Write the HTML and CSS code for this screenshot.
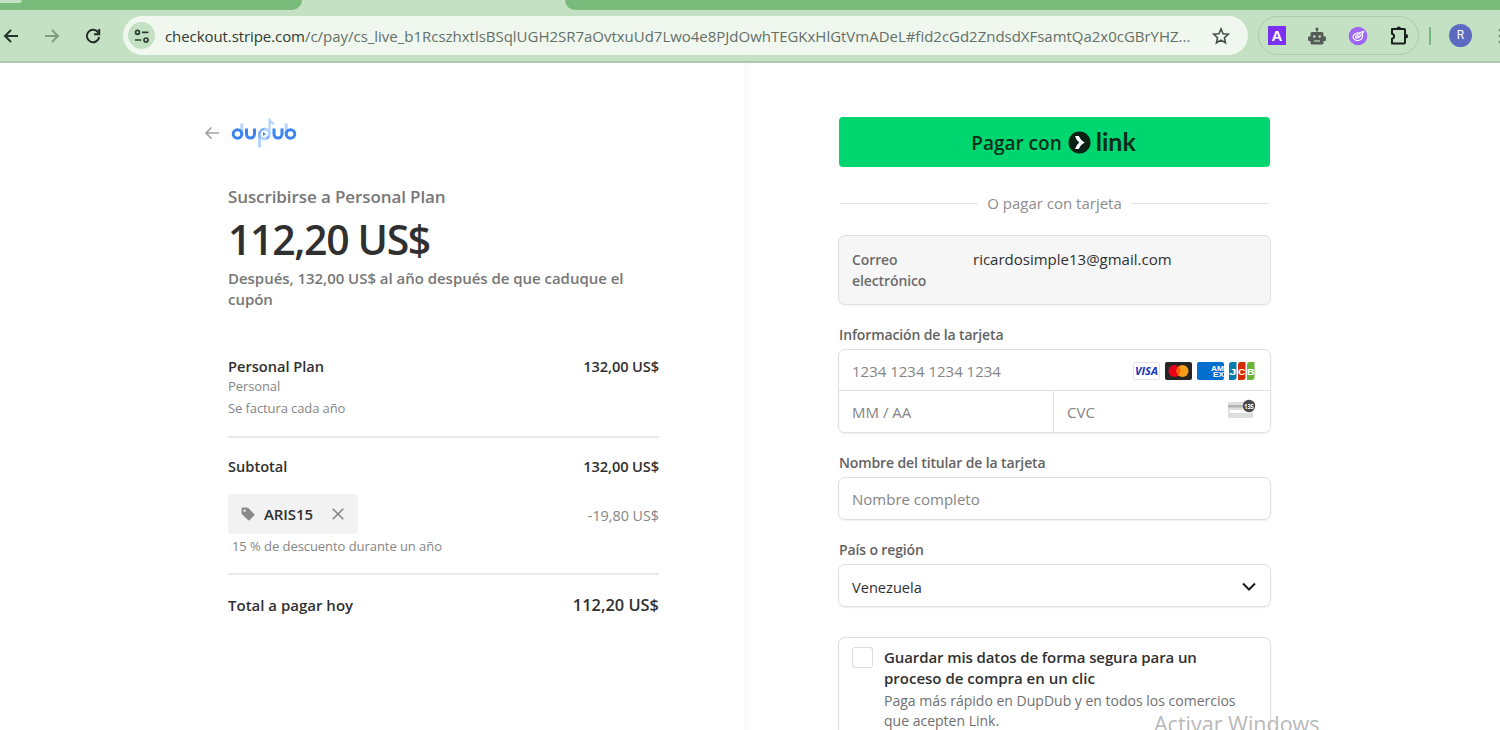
FILE: index.html
```html
<!DOCTYPE html>
<html lang="es">
<head>
  <meta charset="UTF-8">
  <title>DupDub</title>
  <link rel="stylesheet" href="styles.css">
</head>
<body>
  <div class="tabstrip">
    <div class="tab-bg tab-bg-left"><span class="tab-hover"></span></div>
    <div class="tab-bg tab-bg-right"></div>
  </div>
  <div class="toolbar">
    <div class="nav">
      <svg width="20" height="20" viewBox="0 0 20 20" fill="none" stroke="#26352a" stroke-width="2"><path d="M17 10H4M10 4l-6 6 6 6"/></svg>
      <svg width="20" height="20" viewBox="0 0 20 20" fill="none" stroke="#7f9b82" stroke-width="1.8"><path d="M3 10h13M10 4l6 6-6 6"/></svg>
      <svg width="20" height="20" viewBox="0 0 20 20" fill="none" stroke="#1f2b22" stroke-width="2"><path d="M15.4 6.8A6.2 6.2 0 1 0 16.2 11"/><path d="M16.2 3v5.2H11"/></svg>
    </div>
    <div class="address">
      <span class="site-info">
        <svg width="16" height="16" viewBox="0 0 16 16" fill="none" stroke="#2c3c30" stroke-width="1.7"><circle cx="3.500" cy="4.300" r="2"/><path d="M8 4.300h6.500M1 12h6.300"/><circle cx="12" cy="12" r="2"/></svg>
      </span>
      <span class="url"><b>checkout.stripe.com</b>/c/pay/cs_live_b1RcszhxtlsBSqlUGH2SR7aOvtxuUd7Lwo4e8PJdOwhTEGKxHlGtVmADeL#fid2cGd2ZndsdXFsamtQa2x0cGBrYHZ...</span>
      <svg class="star" width="18" height="18" viewBox="0 0 18 18" fill="none" stroke="#465249" stroke-width="1.6"><path d="M9 1.9l2.1 4.8 5.2.5-3.9 3.5 1.1 5.1L9 13.1l-4.5 2.700 1.100-5.100-3.900-3.500 5.200-.5z"/></svg>
    </div>
    <div class="extensions">
      <span class="ext-a">A</span>
      <svg width="20" height="20" viewBox="0 0 20 20" fill="#555b56"><circle cx="10" cy="3" r="1.600"/><path d="M9.400 4h1.200v3H9.400zM5 6h10q1.500 0 1.500 1.500v9.500q0 1.500-1.500 1.500H5q-1.500 0-1.500-1.500V7.500Q3.500 6 5 6zM1 11.500q0-1 1-1h2v4.500H2q-1 0-1-1zM16 10.500h2q1 0 1 1v2.500q0 1-1 1h-2z"/><circle cx="7.300" cy="10.500" r="1.200" fill="#c5e1c4"/><circle cx="12.700" cy="10.500" r="1.200" fill="#c5e1c4"/><path stroke="#c5e1c4" stroke-width="1.200" d="M7 15h6"/></svg>
      <svg width="20" height="20" viewBox="0 0 20 20" fill="none" stroke="#fff" stroke-width="1.200"><circle cx="10" cy="10" r="9.300" fill="#9d66f3" stroke="none"/><path d="M14.500 8.500c1 3.500-2 6.200-5 6-2.500 0-4.500-1.800-4.500-3.500s2.500-4 5.500-4.500"/><path d="M7.500 11.500c0-2 4-5.500 8-6-1 3-4.500 6.500-6.500 6.700-.8.100-1.500-.2-1.500-.7zM9 10.500l2.500-.5M11 7.500l1.500 1"/></svg>
      <svg width="21" height="21" viewBox="0 0 21 21" fill="none" stroke="#17201a" stroke-width="2"><path stroke-linejoin="round" d="M3 4h12q1 0 1 1v12.500q0 1-1 1H3v-4.700a2.600 2.600 0 0 0 0-5.100z"/><path fill="#17201a" stroke="none" d="M7.500 4a2.300 2.600 0 0 1 4.600 0zM16.500 8.900a2.600 2.300 0 0 1 0 4.600z"/></svg>
    </div>
    <span class="separator"></span>
    <span class="avatar">R</span>
    <svg class="kebab" width="2" height="16" viewBox="0 0 2 16" fill="#7c927e"><circle cx="2" cy="2" r="1.500"/><circle cx="2" cy="8" r="1.500"/><circle cx="2" cy="14" r="1.500"/></svg>
  </div>

  <div class="page">
    <div class="summary">
      <div class="brand">
        <svg width="16" height="14" viewBox="0 0 16 14" fill="none" stroke="#a3a3a3" stroke-width="1.700"><path d="M15 7H2M7.500 1.500L2 7l5.500 5.500"/></svg>
        <svg class="logo" width="68" height="34" viewBox="0 0 68 34" fill="none" stroke="#3b84f2" stroke-width="3">
          <g stroke="#b5d3fb"><path d="M10.800 7.500V18M28.500 18v13.500M55.200 7.500V18"/><circle cx="33.500" cy="18" r="5"/><path d="M38.500 18V2.500q0 3.500 4.500 5.500" stroke-width="2.200"/></g>
          <circle cx="6.500" cy="18" r="4.300"/>
          <path d="M15.500 12.500V18a4 4 0 0 0 8 0v-5.500M43 12.500V18a4 4 0 0 0 8 0v-5.500"/>
          <circle cx="59.500" cy="18" r="4.300"/>
          <path d="M28.500 22v-4a5 5 0 0 1 5-5M35 22.500q2-.800 2.800-2.500" stroke-width="1.800" stroke="#76adf7"/>
          <path d="M32 16l3 2-3 2z" fill="#3b84f2" stroke="none"/>
        </svg>
      </div>
      <div class="product">Suscribirse a Personal Plan</div>
      <div class="amount">112,20 US$</div>
      <div class="after">Después, 132,00 US$ al año después de que caduque el<br>cupón</div>

      <div class="line plan"><span>Personal Plan</span><span class="price">132,00 US$</span></div>
      <div class="detail">Personal</div>
      <div class="detail billing">Se factura cada año</div>
      <div class="line subtotal"><span>Subtotal</span><span class="price">132,00 US$</span></div>
      <div class="line discount">
        <span class="coupon">
          <svg width="16" height="16" viewBox="0 0 16 16"><path fill="#8a8a8a" fill-rule="evenodd" d="M1.500 2.800q0-1.300 1.300-1.300h4.400q.6 0 1 .4l6 6q.8.800 0 1.600l-4.500 4.600q-.8.700-1.600 0L1.900 8.300q-.4-.4-.4-1zM4.500 3.400a1.200 1.200 0 1 0 .01 0z"/></svg>
          <b>ARIS15</b>
          <svg width="14" height="14" viewBox="0 0 14 14" stroke="#858585" stroke-width="1.600"><path d="M1.700 1.700l10.600 10.600M12.300 1.700L1.700 12.300"/></svg>
        </span>
        <span class="minus">-19,80 US$</span>
      </div>
      <div class="coupon-note">15 % de descuento durante un año</div>
      <div class="line total"><span>Total a pagar hoy</span><span class="total-price">112,20 US$</span></div>
    </div>

    <div class="payment">
      <button class="link-button">
        <span class="pay-with">Pagar con</span>
        <svg width="23" height="23" viewBox="0 0 23 23"><circle cx="11.500" cy="11.500" r="11" fill="#0a2014"/><path d="M7 5h3.900q1.500 4.300 5.900 6.500-4.400 2.200-5.900 6.500H7q1.100-4 4.300-6.500Q8.100 9 7 5z" fill="#fff"/></svg>
        <span class="link-word">link</span>
      </button>
      <div class="or"><span>O pagar con tarjeta</span></div>
      <div class="email-box">
        <div class="email-label">Correo<br>electrónico</div>
        <div class="email">ricardosimple13@gmail.com</div>
      </div>

      <div class="label">Información de la tarjeta</div>
      <div class="card-box">
        <div class="card-number">
          <span class="hint">1234 1234 1234 1234</span>
          <svg width="122" height="20" viewBox="0 0 122 20">
            <rect x=".5" y="1.500" width="26" height="17" rx="1" fill="#fff" stroke="#e4e4e4"/>
            <text class="visa" x="2" y="14" textLength="23" lengthAdjust="spacingAndGlyphs">VISA</text>
            <rect x="32" y="1" width="27" height="18" rx="2" fill="#252525"/>
            <circle cx="41.500" cy="10" r="6" fill="#eb001b"/><circle cx="49.500" cy="10" r="6" fill="#f79e1b"/><path d="M45.500 5.500a6 6 0 0 1 0 9 6 6 0 0 1 0-9z" fill="#ff5f00"/>
            <rect x="64" y="1" width="27" height="18" rx="2" fill="#016fd0"/>
            <g class="amex"><text x="78" y="9.800" textLength="13" lengthAdjust="spacingAndGlyphs">AM</text><text x="80" y="16" textLength="11" lengthAdjust="spacingAndGlyphs">EX</text></g>
            <path d="M98.500 1h5v15q0 3-3 3h-4.500V4q0-3 2.500-3z" fill="#0b7cae"/><path d="M107.500 1h5v15q0 3-3 3H105V4q0-3 2.500-3z" fill="#d42d06"/><path d="M116.500 1h5v15q0 3-3 3H114V4q0-3 2.500-3z" fill="#67b637"/>
            <g class="jcb"><text x="96" y="13.500" textLength="7.500" lengthAdjust="spacingAndGlyphs">J</text><text x="105" y="13.500" textLength="7.500" lengthAdjust="spacingAndGlyphs">C</text><text x="114" y="13.500" textLength="7.500" lengthAdjust="spacingAndGlyphs">B</text></g>
          </svg>
        </div>
        <div class="card-extra">
          <div class="expiry"><span class="hint">MM / AA</span></div>
          <div class="cvc">
            <span class="hint">CVC</span>
            <svg width="30" height="20" viewBox="0 0 30 20"><rect x="1" y="3" width="25" height="16" rx="1.500" fill="#dedede"/><path d="M1 6h18v2.500H1z" fill="#b3b3b3"/><path d="M3 11h20v3H3z" fill="#fff"/><circle cx="22" cy="7" r="6.200" fill="#4a4a4a"/><text class="digits" x="17.200" y="9.700" textLength="9.600" lengthAdjust="spacingAndGlyphs">135</text></svg>
          </div>
        </div>
      </div>

      <div class="label">Nombre del titular de la tarjeta</div>
      <div class="field"><span class="hint">Nombre completo</span></div>
      <div class="label">País o región</div>
      <div class="field country">
        <span>Venezuela</span>
        <svg width="14" height="10" viewBox="0 0 14 10" fill="none" stroke="#1a1a1a" stroke-width="2"><path d="M1 1.500l6 6 6-6"/></svg>
      </div>
      <div class="save-box">
        <span class="checkbox"></span>
        <div>
          <div class="save-title">Guardar mis datos de forma segura para un<br><span class="save-second">proceso de compra en un clic</span></div>
          <div class="save-text">Paga más rápido en DupDub y en todos los comercios<br>que acepten Link.</div>
        </div>
      </div>
    </div>
  </div>
  <div class="watermark">Activar Windows</div>
</body>
</html>
```

FILE: styles.css
```css
* { box-sizing: border-box; }
body {
  margin: 0;
  width: 1500px;
  height: 730px;
  overflow: hidden;
  position: relative;
  background: #fff;
  color: #303030;
  font-family: "Open Sans", "Noto Sans", sans-serif;
  font-size: 14px;
  line-height: 20px;
}
svg { display: block; flex: none; }
span, .product, .amount, .label { white-space: nowrap; }

/* browser chrome */
.tabstrip {
  display: flex;
  justify-content: space-between;
  height: 10px;
  background: #c5e1c4;
}
.tab-bg { background: #78bb7b; height: 10px; }
.tab-bg-left { width: 302px; border-bottom-right-radius: 10px; }
.tab-bg-right { width: 935px; border-bottom-left-radius: 10px; }
.tab-hover {
  display: block;
  width: 22px;
  height: 3px;
  background: #c5e1c4;
  border-bottom-right-radius: 6px;
}
.toolbar {
  display: flex;
  align-items: center;
  height: 53px;
  background: #c5e1c4;
  border-bottom: 2px solid #aac8ab;
}
.nav {
  display: flex;
  gap: 21px;
  width: 123px;
  padding-left: 1px;
}
.address {
  display: flex;
  align-items: center;
  width: 1125px;
  height: 39px;
  padding: 0 18px 0 5px;
  border-radius: 20px;
  background: #eff7ee;
}
.site-info {
  display: flex;
  align-items: center;
  justify-content: center;
  width: 27px;
  height: 27px;
  border-radius: 50%;
  background: #c5e1c4;
}
.url {
  width: 1030px;
  margin-left: 10px;
  color: #657068;
  font-size: 15px;
  letter-spacing: -0.02px;
}
.url b { color: #303a33; font-weight: 400; letter-spacing: -0.08px; }
.star { margin-left: auto; }
.extensions {
  display: flex;
  align-items: center;
  gap: 21px;
  width: 161px;
  height: 39px;
  margin-left: 10px;
  padding-left: 9px;
  border: 1px solid #aacbab;
  border-radius: 20px;
}
.ext-a {
  width: 18px;
  height: 19px;
  background: #7b2ff0;
  color: #fff;
  font: bold 15px/19px "Liberation Sans", sans-serif;
  text-align: center;
}
.separator {
  width: 2px;
  height: 18px;
  margin-left: 10px;
  background: #78bb7b;
}
.avatar {
  width: 23px;
  height: 23px;
  margin-left: 18px;
  border-radius: 50%;
  background: #5c6bc0;
  color: #fff;
  font: 12px/23px Roboto, sans-serif;
  text-align: center;
}
.kebab { margin-left: auto; }

/* checkout */
.page { display: flex; height: 667px; overflow: hidden; }
.summary {
  width: 749px;
  padding: 53px 85px 0 228px;
  border-right: 5px solid #fbfbfb;
}
.brand {
  display: flex;
  align-items: center;
  gap: 11px;
  height: 34px;
  margin-left: -24px;
}
.product {
  margin-top: 36px;
  height: 22px;
  line-height: 22px;
  color: #777;
  font-size: 17px;
  font-weight: 600;
  letter-spacing: -0.1px;
}
.amount {
  height: 58px;
  margin-top: 2px;
  line-height: 58px;
  font-size: 41px;
  font-weight: 600;
  letter-spacing: -1.35px;
}
.after {
  color: #777;
  font-size: 15px;
  font-weight: 600;
  letter-spacing: -0.03px;
  line-height: 20.5px;
  white-space: nowrap;
}
.line {
  display: flex;
  justify-content: space-between;
  align-items: center;
  font-size: 14.6px;
  font-weight: 600;
}
.price { letter-spacing: -0.1px; }
.plan { margin-top: 47px; }
.detail { color: #858585; font-size: 13px; line-height: 21px; letter-spacing: -0.1px; }
.billing { height: 41px; line-height: 22px; border-bottom: 2px solid #e9e9e9; }
.subtotal { margin-top: 18px; }
.discount { margin-top: 18px; }
.coupon {
  display: flex;
  align-items: center;
  width: 130px;
  height: 40px;
  padding: 0 13px 0 12px;
  border-radius: 4px;
  background: #f2f2f2;
  font-size: 15px;
}
.coupon b { margin: 0 auto 0 8px; font-weight: 600; letter-spacing: -0.1px; }
.minus { color: #858585; font-size: 14.3px; font-weight: 400; padding-top: 3px; }
.coupon-note {
  height: 41px;
  padding: 2px 0 0 4px;
  border-bottom: 2px solid #e9e9e9;
  color: #858585;
  font-size: 13px;
  letter-spacing: -0.06px;
}
.total { margin-top: 20px; font-size: 15px; }
.total-price { font-size: 16.4px; }

.payment { width: 433px; margin-left: 89px; padding-top: 54px; }
.link-button {
  display: flex;
  align-items: center;
  justify-content: center;
  gap: 6px;
  width: 431px;
  height: 50px;
  margin-left: 1px;
  padding: 0 2px 0 0;
  border: 0;
  border-radius: 4px;
  background: #00d66f;
  color: #0a2e1a;
  font: 600 19px "Open Sans", sans-serif;
}
.pay-with { padding-top: 1px; }
.link-word { font: bold 25px Lato, sans-serif; margin-left: -1px; padding-bottom: 2px; }
.or {
  display: flex;
  align-items: center;
  gap: 9px;
  height: 20px;
  margin: 26px 2px 0;
  color: #8d8d8d;
  font-size: 15px;
}
.or::before, .or::after {
  content: "";
  flex: 1;
  height: 1px;
  background: #e4e4e4;
}
.email-box {
  display: flex;
  height: 70px;
  margin-top: 22px;
  padding: 14px 13px;
  border: 1px solid #e0e0e0;
  border-radius: 7px;
  background: #f6f6f6;
  box-shadow: 0 1px 2px #0000000d;
}
.email-label {
  width: 121px;
  color: #6b6b6b;
  font-weight: 600;
  letter-spacing: -0.1px;
  line-height: 20.5px;
}
.email { font-size: 15px; line-height: 18px; }
.label {
  height: 20px;
  margin: 20px 0 4px 1px;
  color: #626262;
  font-weight: 600;
  letter-spacing: -0.13px;
}
.card-box, .field, .save-box {
  border: 1px solid #e0e0e0;
  border-radius: 7px;
  box-shadow: 0 1px 2px #00000012;
}
.card-box { height: 84px; }
.card-number {
  display: flex;
  align-items: center;
  justify-content: space-between;
  height: 41px;
  padding: 2px 15px 0 13px;
  border-bottom: 1px solid #e0e0e0;
}
.card-extra { display: flex; height: 41px; }
.expiry, .cvc { display: flex; align-items: center; padding: 0 13px; }
.expiry { width: 215px; border-right: 1px solid #e0e0e0; }
.cvc { flex: 1; justify-content: space-between; }
.cvc svg { margin-top: -6px; }
.hint { color: #858585; font-size: 15px; }
.visa { font: italic bold 11px "Open Sans", sans-serif; fill: #1a34bd; }
.amex { font: bold 8px "Liberation Sans", sans-serif; fill: #fff; }
.jcb { font: bold 9px "Liberation Sans", sans-serif; fill: #fff; }
.digits { font: bold 7.5px "Open Sans", sans-serif; fill: #fff; }
.field {
  display: flex;
  align-items: center;
  justify-content: space-between;
  height: 43px;
  padding: 0 14px 0 13px;
}
.country { padding-top: 2px; font-size: 14.6px; }
.save-box {
  display: flex;
  gap: 11px;
  height: 93px;
  margin-top: 30px;
  padding: 9px 13px 0;
  border-bottom: 0;
  border-radius: 7px 7px 0 0;
}
.checkbox {
  width: 21px;
  height: 21px;
  border: 1px solid #dcdcdc;
  border-radius: 3px;
}
.save-title {
  font-weight: 600;
  font-size: 15px;
  letter-spacing: -0.1px;
  line-height: 20.5px;
  white-space: nowrap;
}
.save-second { letter-spacing: 0; }
.save-text { margin-top: 3px; color: #707070; line-height: 19.500px; white-space: nowrap; }
.watermark {
  position: absolute;
  left: 1154px;
  top: 710px;
  color: #b9b9b9;
  font-size: 21.5px;
  line-height: 28px;
  white-space: nowrap;
}
```
